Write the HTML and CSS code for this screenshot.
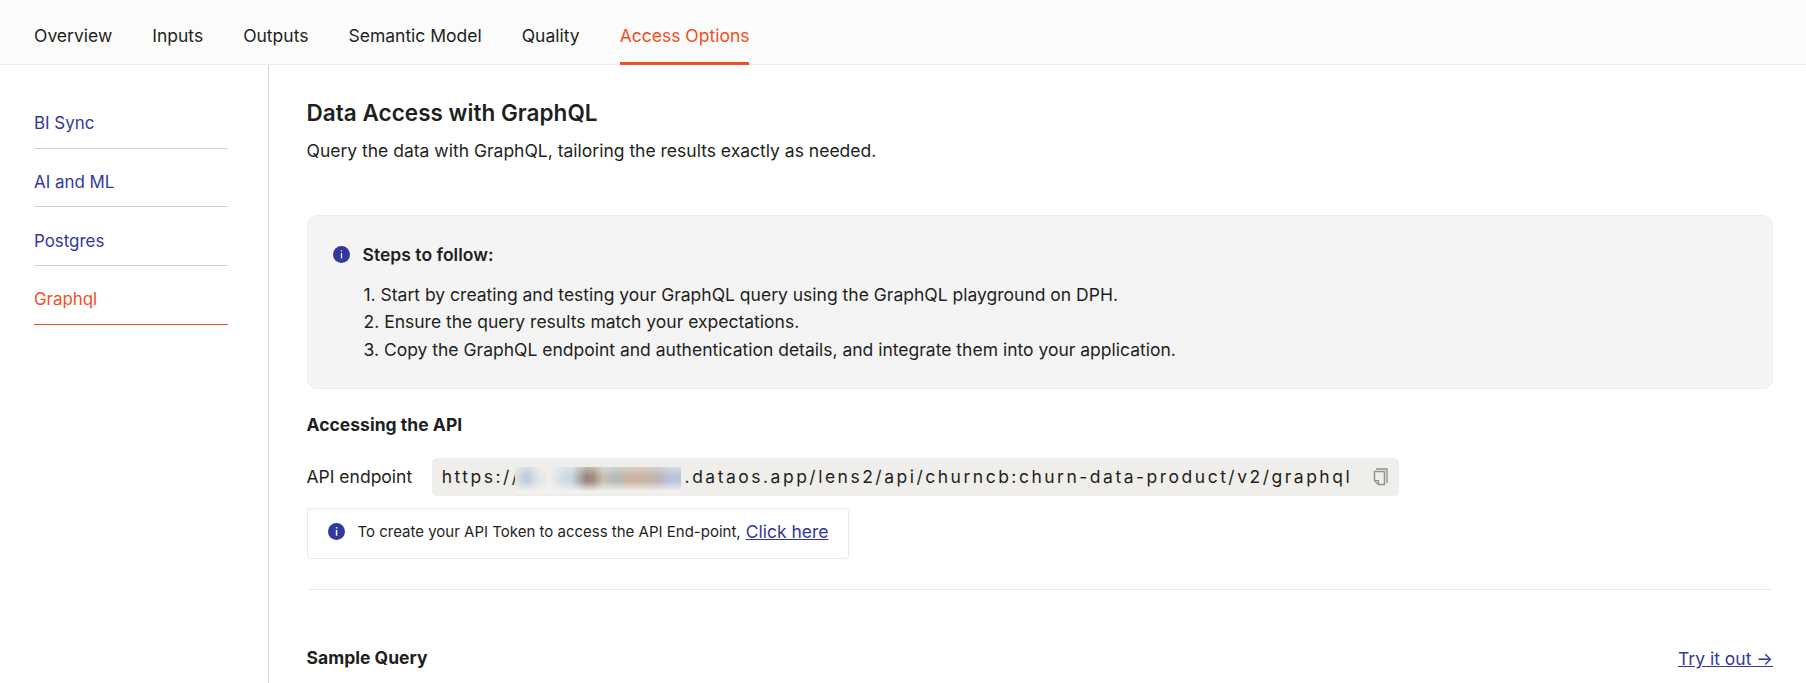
FILE: index.html
```html
<!DOCTYPE html>
<html lang="en">
<head>
<meta charset="utf-8">
<title>Access Options</title>
<link rel="stylesheet" href="styles.css">
</head>
<body>
<nav class="tabs">
  <a class="tab">Overview</a>
  <a class="tab">Inputs</a>
  <a class="tab">Outputs</a>
  <a class="tab">Semantic Model</a>
  <a class="tab">Quality</a>
  <a class="tab tab-active">Access Options</a>
</nav>
<div class="layout">
  <aside class="sidebar">
    <a class="side-link">BI Sync</a>
    <a class="side-link">AI and ML</a>
    <a class="side-link">Postgres</a>
    <a class="side-link side-active">Graphql</a>
  </aside>
  <main class="content">
    <h1 class="title">Data Access with GraphQL</h1>
    <p class="subtitle">Query the data with GraphQL, tailoring the results exactly as needed.</p>
    <section class="steps">
      <div class="steps-head">
        <svg class="info" viewBox="0 0 17 17"><circle cx="8.5" cy="8.5" r="8.5" fill="#32389c"/><path d="M7.9 7h1.2v5.4H7.9zM7.9 4.3h1.2v1.3H7.9z" fill="#fff"/></svg>
        <h2 class="steps-title">Steps to follow:</h2>
      </div>
      <div class="steps-list">
        <div>1. Start by creating and testing your GraphQL query using the GraphQL playground on DPH.</div>
        <div>2. Ensure the query results match your expectations.</div>
        <div>3. Copy the GraphQL endpoint and authentication details, and integrate them into your application.</div>
      </div>
    </section>
    <h2 class="section-title">Accessing the API</h2>
    <div class="endpoint">
      <span class="endpoint-label">API endpoint</span>
      <div class="endpoint-box">
        <span class="url-start">https://</span>
        <span class="mask"></span>
        <span class="url-end">.dataos.app/lens2/api/churncb:churn-data-product/v2/graphql</span>
        <svg class="copy" viewBox="0 0 15 18" fill="none"><path d="M3 1h11v14" stroke="#8f8f8d" stroke-width="1.3"/><path d="M1.5 3.5h10v13h-6l-4-4z" stroke="#929290" stroke-width="1.5"/><path d="M1.5 12.5h4v4" stroke="#929290" stroke-width="1.2"/></svg>
      </div>
    </div>
    <div class="token">
      <svg class="info" viewBox="0 0 17 17"><circle cx="8.5" cy="8.5" r="8.5" fill="#32389c"/><path d="M7.8 7h1.5v5.7H7.8zM7.8 4.1h1.5v1.5H7.8z" fill="#fff"/></svg>
      <span class="token-text">To create your API Token to access the API End-point,</span>
      <a class="link">Click here</a>
    </div>
    <div class="sample">
      <h2 class="sample-title">Sample Query</h2>
      <a class="link">Try it out →</a>
    </div>
  </main>
</div>
</body>
</html>
```
FILE: styles.css
```css
* { box-sizing: border-box; }
body {
  margin: 0;
  height: 683px;
  overflow: hidden;
  background: #fff;
  color: #1e1f21;
  font: 17.5px/27.5px Inter, sans-serif;
}
h1, h2, p { margin: 0; }
.tabs {
  display: flex;
  gap: 40px;
  height: 65px;
  padding: 0 34px;
  background: #fbfbfb;
  border-bottom: 1px solid #ececec;
}
.tab { height: 65px; padding-top: 22px; white-space: nowrap; }
.tab-active { color: #f04e23; border-bottom: 3px solid #f04e23; }
.layout { display: flex; height: 618px; }
.sidebar {
  flex: none;
  width: 269px;
  padding: 24.9px 40.5px 0 34px;
  border-right: 1px solid #d0d0d0;
}
.side-link {
  display: flex;
  align-items: flex-end;
  height: 58.75px;
  padding-bottom: 10px;
  border-bottom: 1px solid #d0d0d0;
  color: #32389c;
  font-size: 16.9px;
}
.side-active { color: #f04e23; border-color: #f04e23; }
.content { flex: 1; min-width: 0; padding: 33px 33px 0 37.5px; }
.title { font-size: 22.5px; line-height: 30px; font-weight: 600; letter-spacing: 0.03px; }
.subtitle { margin-top: 9px; }
.steps {
  height: 174px;
  margin-top: 50px;
  padding: 25px;
  background: #f4f4f4;
  border: 1px solid #ececec;
  border-radius: 10px;
}
.steps-head { display: flex; align-items: center; gap: 13px; height: 28px; }
.info { flex: none; width: 17px; height: 17px; }
.steps-title { font-size: 17.5px; font-weight: 600; letter-spacing: 0.03px; }
.section-title, .sample-title { font-size: 17.5px; font-weight: 700; letter-spacing: 0.02px; }
.steps-list { padding: 12px 0 0 31px; }
.section-title { margin-top: 22px; }
.endpoint { display: flex; align-items: center; gap: 19.5px; height: 38px; margin-top: 20px; }
.endpoint-box {
  display: flex;
  align-items: center;
  width: 967px;
  height: 38px;
  padding: 0 11px 0 10px;
  border-radius: 5px;
  background: #efeeea;
  letter-spacing: 2.5px;
  white-space: nowrap;
}
.url-start { flex: none; margin-right: -5.5px; }
.mask {
  flex: none;
  width: 166px;
  height: 26px;
  margin: 6px auto 0 0;
  z-index: 1;
  background:
    linear-gradient(180deg, rgba(243,243,240,.45) 0, rgba(243,243,240,0) 35%, rgba(243,243,240,0) 55%, #f3f3f0 95%),
    linear-gradient(90deg, #dfe3e6 0, #bccbd9 7%, #e5e7e6 15%, #eeeeeb 21%, #cbdbe5 30%, #c9d7df 34%, #978780 43%, #a28c80 47%, #c9c1b6 53%, #b0bcbf 60%, #cfb49f 70%, #c9b4a6 78%, #bdb4ba 86%, #b9c2da 93%, #bbc6dd 100%);
}
.url-end { margin-right: 20.5px; }
.copy { flex: none; width: 15px; height: 18px; }
.token {
  display: flex;
  align-items: center;
  width: 542.5px;
  height: 51px;
  margin-top: 12px;
  padding: 0 20px 4px;
  border: 1px solid #e8e8ef;
  border-radius: 3px;
}
.token-text { margin: 0 5px 0 13px; font-size: 15px; white-space: nowrap; }
.link { color: #32389c; text-decoration: underline; white-space: nowrap; }
.sample {
  display: flex;
  justify-content: space-between;
  margin-top: 30px;
  padding-top: 55px;
  border-top: 1px solid #ececec;
}
.sample-title { margin-top: -1px; }
```
